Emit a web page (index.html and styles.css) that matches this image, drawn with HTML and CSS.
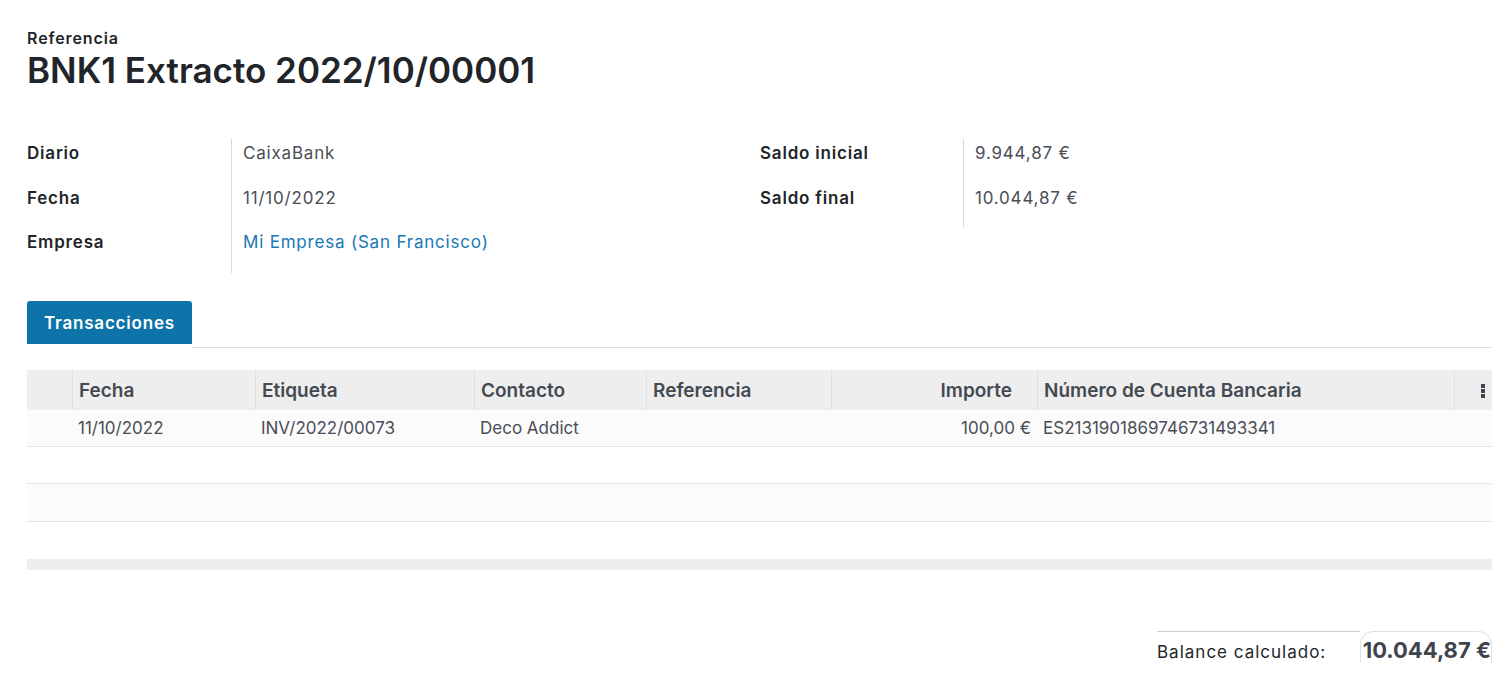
FILE: index.html
```html
<!DOCTYPE html>
<html lang="es">
<head>
<meta charset="utf-8">
<title>BNK1 Extracto 2022/10/00001</title>
<link rel="stylesheet" href="styles.css">
</head>
<body>
<div class="sheet">
  <div class="title-block">
    <div class="ref-label">Referencia</div>
    <h1 class="title">BNK1 Extracto 2022/10/00001</h1>
  </div>

  <div class="groups">
    <div class="group">
      <div class="lbl">Diario</div><div class="val">CaixaBank</div>
      <div class="lbl">Fecha</div><div class="val">11/10/2022</div>
      <div class="lbl">Empresa</div><div class="val"><a class="link" href="#">Mi Empresa (San Francisco)</a></div>
    </div>
    <div class="group group-right">
      <div class="lbl">Saldo inicial</div><div class="val">9.944,87 €</div>
      <div class="lbl">Saldo final</div><div class="val">10.044,87 €</div>
    </div>
  </div>

  <div class="tabs">
    <div class="tab active">Transacciones</div>
    <div class="tab-fill"></div>
  </div>

  <table class="list">
    <colgroup>
      <col class="w-handle">
      <col class="w-fecha">
      <col class="w-etq">
      <col class="w-con">
      <col class="w-ref">
      <col class="w-imp">
      <col class="w-cta">
      <col class="w-opt">
    </colgroup>
    <thead>
      <tr>
        <th></th>
        <th>Fecha</th>
        <th>Etiqueta</th>
        <th>Contacto</th>
        <th>Referencia</th>
        <th class="num imp-head">Importe</th>
        <th>Número de Cuenta Bancaria</th>
        <th class="opt"><span class="kebab"><i></i><i></i><i></i></span></th>
      </tr>
    </thead>
    <tbody>
      <tr class="odd">
        <td></td>
        <td>11/10/2022</td>
        <td>INV/2022/00073</td>
        <td>Deco Addict</td>
        <td></td>
        <td class="num">100,00 €</td>
        <td>ES2131901869746731493341</td>
        <td></td>
      </tr>
      <tr class="even"><td colspan="8"></td></tr>
      <tr class="odd tall"><td colspan="8"></td></tr>
      <tr class="even last"><td colspan="8"></td></tr>
    </tbody>
    <tfoot>
      <tr><td colspan="8"></td></tr>
    </tfoot>
  </table>

  <div class="totals">
    <div class="tot-label">Balance calculado:</div>
    <div class="tot-value">10.044,87 €</div>
  </div>
</div>
</body>
</html>
```

FILE: styles.css
```css
html, body {
  margin: 0;
  padding: 0;
  background: #ffffff;
}

body {
  font-family: Inter, "Noto Sans", "Open Sans", sans-serif;
  color: #212529;
}

.sheet {
  padding: 27px 14px 0 27px;
}

.ref-label {
  font-size: 16px;
  font-weight: 600;
  line-height: 22px;
  letter-spacing: 0.9px;
  color: #212529;
}

.title {
  margin: 0;
  font-size: 35px;
  font-weight: 600;
  line-height: 42px;
  color: #212529;
}

.groups {
  display: grid;
  grid-template-columns: 713px 1fr;
  gap: 20px;
  margin-top: 48px;
}

.group {
  display: grid;
  grid-template-columns: 204px 1fr;
  align-content: start;
}

.lbl,
.val {
  height: 44.7px;
  box-sizing: border-box;
  padding-top: 2px;
  line-height: 24px;
  font-size: 17px;
  letter-spacing: 0.8px;
}

.lbl {
  font-weight: 600;
  color: #212529;
}

.val {
  border-left: 1px solid #d8d8d8;
  padding-left: 11px;
  color: #4a4e57;
}

.group-right {
  grid-template-columns: 203px 1fr;
}

.link {
  color: #1878b6;
  text-decoration: none;
}

.tabs {
  display: flex;
  margin-top: 28px;
}

.tab {
  height: 43px;
  padding: 0 17px;
  display: flex;
  align-items: center;
  font-size: 17px;
  font-weight: 600;
  letter-spacing: 0.8px;
  border-radius: 3px 3px 0 0;
}

.tab.active {
  background: #0d73a8;
  color: #ffffff;
}

.tab-fill {
  flex: 1;
  border-bottom: 1px solid #dedede;
  margin-bottom: -4px;
}

.list {
  width: 100%;
  table-layout: fixed;
  margin-top: 26px;
  border-collapse: separate;
  border-spacing: 0;
}

.w-handle { width: 45px; }
.w-fecha { width: 183px; }
.w-etq { width: 219px; }
.w-con { width: 172px; }
.w-ref { width: 185px; }
.w-imp { width: 206px; }
.w-cta { width: 417px; }
.w-opt { width: 38px; }

.list th {
  height: 40px;
  box-sizing: border-box;
  padding: 0 6px;
  background: #eeeeee;
  font-size: 19px;
  font-weight: 600;
  color: #444a52;
  text-align: left;
  white-space: nowrap;
  border-left: 1px solid #e0e0e0;
}

.list th:first-child {
  border-left: none;
}

.list td {
  height: 37px;
  box-sizing: border-box;
  padding: 0 6px;
  font-size: 17px;
  color: #4a4e57;
  white-space: nowrap;
  border-bottom: 1px solid #e6e6e6;
}

.list .num {
  text-align: right;
}

.list th.imp-head {
  padding-right: 25px;
}

.list th.opt {
  text-align: right;
  padding-right: 7px;
}

.list tr.odd td {
  background: #fbfbfb;
}

.list tr.tall td {
  height: 38px;
}

.list tr.last td {
  border-bottom: none;
}

.list tfoot td {
  height: 11px;
  padding: 0;
  background: #eeeeee;
  border-bottom: none;
}

.kebab {
  display: inline-flex;
  flex-direction: column;
  gap: 1px;
  vertical-align: middle;
}

.kebab i {
  display: block;
  width: 4px;
  height: 4px;
  background: #3d4550;
}

.totals {
  display: flex;
  justify-content: flex-end;
  margin-top: 61px;
}

.tot-label {
  width: 203px;
  border-top: 1px solid #cfcfcf;
  padding-top: 10px;
  font-size: 17px;
  letter-spacing: 1px;
  color: #212529;
}

.tot-value {
  width: 130px;
  border: 1px solid #e0e0e0;
  border-bottom: none;
  border-radius: 14px 14px 0 0;
  padding-top: 5px;
  text-align: right;
  font-size: 22px;
  font-weight: 700;
  color: #3f444c;
}
```
